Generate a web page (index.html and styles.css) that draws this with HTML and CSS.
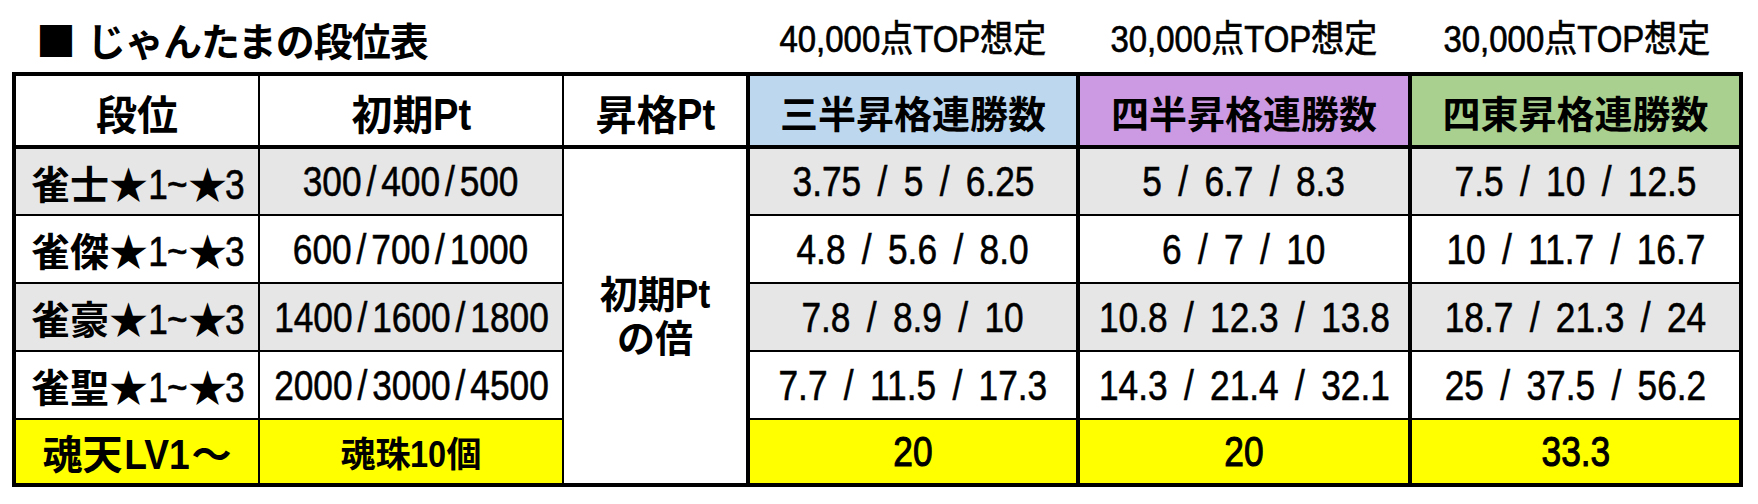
FILE: index.html
```html
<!DOCTYPE html>
<html lang="ja">
<head>
<meta charset="utf-8">
<title>じゃんたまの段位表</title>
<link rel="stylesheet" href="styles.css">
</head>
<body>
<div class="page">
  <div class="topbar">
    <h1 class="title"><span class="sq">■</span><span>じゃんたまの段位表</span></h1>
    <div class="label"><span class="cond">40,000点TOP想定</span></div>
    <div class="label"><span class="cond">30,000点TOP想定</span></div>
    <div class="label"><span class="cond">30,000点TOP想定</span></div>
  </div>
  <table class="rank">
    <colgroup>
      <col class="w1"><col class="w2"><col class="w3"><col class="w4"><col class="w5"><col class="w6">
    </colgroup>
    <thead>
      <tr>
        <th>段位</th>
        <th>初期<span class="lat">Pt</span></th>
        <th>昇格<span class="lat">Pt</span></th>
        <th class="wide blue">三半昇格連勝数</th>
        <th class="wide purple">四半昇格連勝数</th>
        <th class="wide green">四東昇格連勝数</th>
      </tr>
    </thead>
    <tbody>
      <tr class="grey">
        <td class="name"><b>雀士</b>★<span class="num">1~</span>★<span class="num">3</span></td>
        <td><span class="num pts">300<span class="sl">/</span>400<span class="sl">/</span>500</span></td>
        <td class="merged" rowspan="5">初期<span class="lat">Pt</span><br>の倍</td>
        <td class="wide"><span class="num">3.75 <span class="sl">/</span> 5 <span class="sl">/</span> 6.25</span></td>
        <td class="wide"><span class="num">5 <span class="sl">/</span> 6.7 <span class="sl">/</span> 8.3</span></td>
        <td class="wide"><span class="num">7.5 <span class="sl">/</span> 10 <span class="sl">/</span> 12.5</span></td>
      </tr>
      <tr>
        <td class="name"><b>雀傑</b>★<span class="num">1~</span>★<span class="num">3</span></td>
        <td><span class="num pts">600<span class="sl">/</span>700<span class="sl">/</span>1000</span></td>
        <td class="wide"><span class="num">4.8 <span class="sl">/</span> 5.6 <span class="sl">/</span> 8.0</span></td>
        <td class="wide"><span class="num">6 <span class="sl">/</span> 7 <span class="sl">/</span> 10</span></td>
        <td class="wide"><span class="num">10 <span class="sl">/</span> 11.7 <span class="sl">/</span> 16.7</span></td>
      </tr>
      <tr class="grey">
        <td class="name"><b>雀豪</b>★<span class="num">1~</span>★<span class="num">3</span></td>
        <td><span class="num pts">1400<span class="sl">/</span>1600<span class="sl">/</span>1800</span></td>
        <td class="wide"><span class="num">7.8 <span class="sl">/</span> 8.9 <span class="sl">/</span> 10</span></td>
        <td class="wide"><span class="num">10.8 <span class="sl">/</span> 12.3 <span class="sl">/</span> 13.8</span></td>
        <td class="wide"><span class="num">18.7 <span class="sl">/</span> 21.3 <span class="sl">/</span> 24</span></td>
      </tr>
      <tr>
        <td class="name"><b>雀聖</b>★<span class="num">1~</span>★<span class="num">3</span></td>
        <td><span class="num pts">2000<span class="sl">/</span>3000<span class="sl">/</span>4500</span></td>
        <td class="wide"><span class="num">7.7 <span class="sl">/</span> 11.5 <span class="sl">/</span> 17.3</span></td>
        <td class="wide"><span class="num">14.3 <span class="sl">/</span> 21.4 <span class="sl">/</span> 32.1</span></td>
        <td class="wide"><span class="num">25 <span class="sl">/</span> 37.5 <span class="sl">/</span> 56.2</span></td>
      </tr>
      <tr class="yellow">
        <td class="tenkai">魂天<span class="lat">LV1</span>〜</td>
        <td class="tama">魂珠<span class="lat">10</span>個</td>
        <td class="wide"><span class="num">20</span></td>
        <td class="wide"><span class="num">20</span></td>
        <td class="wide"><span class="num">33.3</span></td>
      </tr>
    </tbody>
  </table>
</div>
</body>
</html>
```

FILE: styles.css
```css
* {
  box-sizing: border-box;
}

html, body {
  margin: 0;
  padding: 0;
  background: #ffffff;
}

body {
  font-family: "Liberation Sans", "Noto Sans CJK JP", sans-serif;
  color: #000000;
}

.page {
  width: 1758px;
  height: 504px;
  padding-left: 12px;
}

.topbar {
  display: grid;
  grid-template-columns: 247px 304px 185px 330px 332px 333px;
  height: 72px;
  align-items: center;
}

.title {
  grid-column: 1 / 4;
  margin: 0;
  padding-left: 24px;
  padding-top: 6px;
  font-family: "Noto Sans CJK JP", sans-serif;
  font-size: 39px;
  font-weight: 700;
  line-height: 1;
  display: flex;
  align-items: center;
  gap: 12px;
  letter-spacing: -1px;
}

.sq {
  font-size: 40px;
}

.label {
  text-align: center;
  font-size: 37px;
  font-weight: 400;
  line-height: 1;
  padding-top: 6px;
}

.cond {
  display: inline-block;
  transform: scaleX(0.89);
  -webkit-text-stroke: 0.7px #000;
  white-space: nowrap;
}

.rank {
  border-collapse: collapse;
  table-layout: fixed;
  width: 1731px;
  border: 4px solid #000;
}

.w1 { width: 245px; }
.w2 { width: 304px; }
.w3 { width: 185px; }
.w4 { width: 330px; }
.w5 { width: 332px; }
.w6 { width: 331px; }

.rank th,
.rank td {
  border: 2px solid #000;
  padding: 0;
  text-align: center;
  vertical-align: middle;
  white-space: nowrap;
  background: #ffffff;
}

.rank thead tr {
  height: 73px;
}

.rank thead th {
  border-bottom: 4px solid #000;
  font-size: 41px;
  font-weight: 700;
  padding-top: 2px;
}

.rank th.wide {
  font-size: 38px;
}

.rank .wide {
  border-left: 4px solid #000;
  border-right: 4px solid #000;
}

.rank tbody tr {
  height: 68px;
}

.rank tbody tr.yellow {
  height: 66px;
}

.lat {
  font-family: "Liberation Sans", sans-serif;
  display: inline-block;
  transform: scaleX(0.86);
  font-size: 1.08em;
  margin: 0 -0.08em;
}

.blue { background: #bdd7ee !important; }
.purple { background: #cc9ae2 !important; }
.green { background: #a9d08e !important; }

.grey td { background: #e7e6e6; }
.grey td.merged { background: #ffffff; }
.yellow td { background: #ffff00; }

.num {
  display: inline-block;
  font-size: 43px;
  font-weight: 400;
  transform: scaleX(0.82);
  word-spacing: 3px;
  -webkit-text-stroke: 0.6px #000;
  line-height: 1;
  margin: 0 -40px;
}

.sl {
  margin: 0 5px;
}

.pts .sl {
  margin: 0 6px;
}

.name {
  font-size: 39px;
  letter-spacing: -1px;
}

.name b {
  font-weight: 700;
  letter-spacing: 0;
}

.name .num {
  font-size: 43px;
  margin: 0 -3px;
}

.merged {
  font-size: 38px;
  font-weight: 700;
  line-height: 44px;
  background: #ffffff;
}

.tenkai {
  font-size: 40px;
  font-weight: 700;
}

.tama {
  font-size: 35px;
  font-weight: 700;
}

.yellow .num {
  font-weight: 400;
  -webkit-text-stroke: 1.1px #000;
  margin: 0;
}
```
